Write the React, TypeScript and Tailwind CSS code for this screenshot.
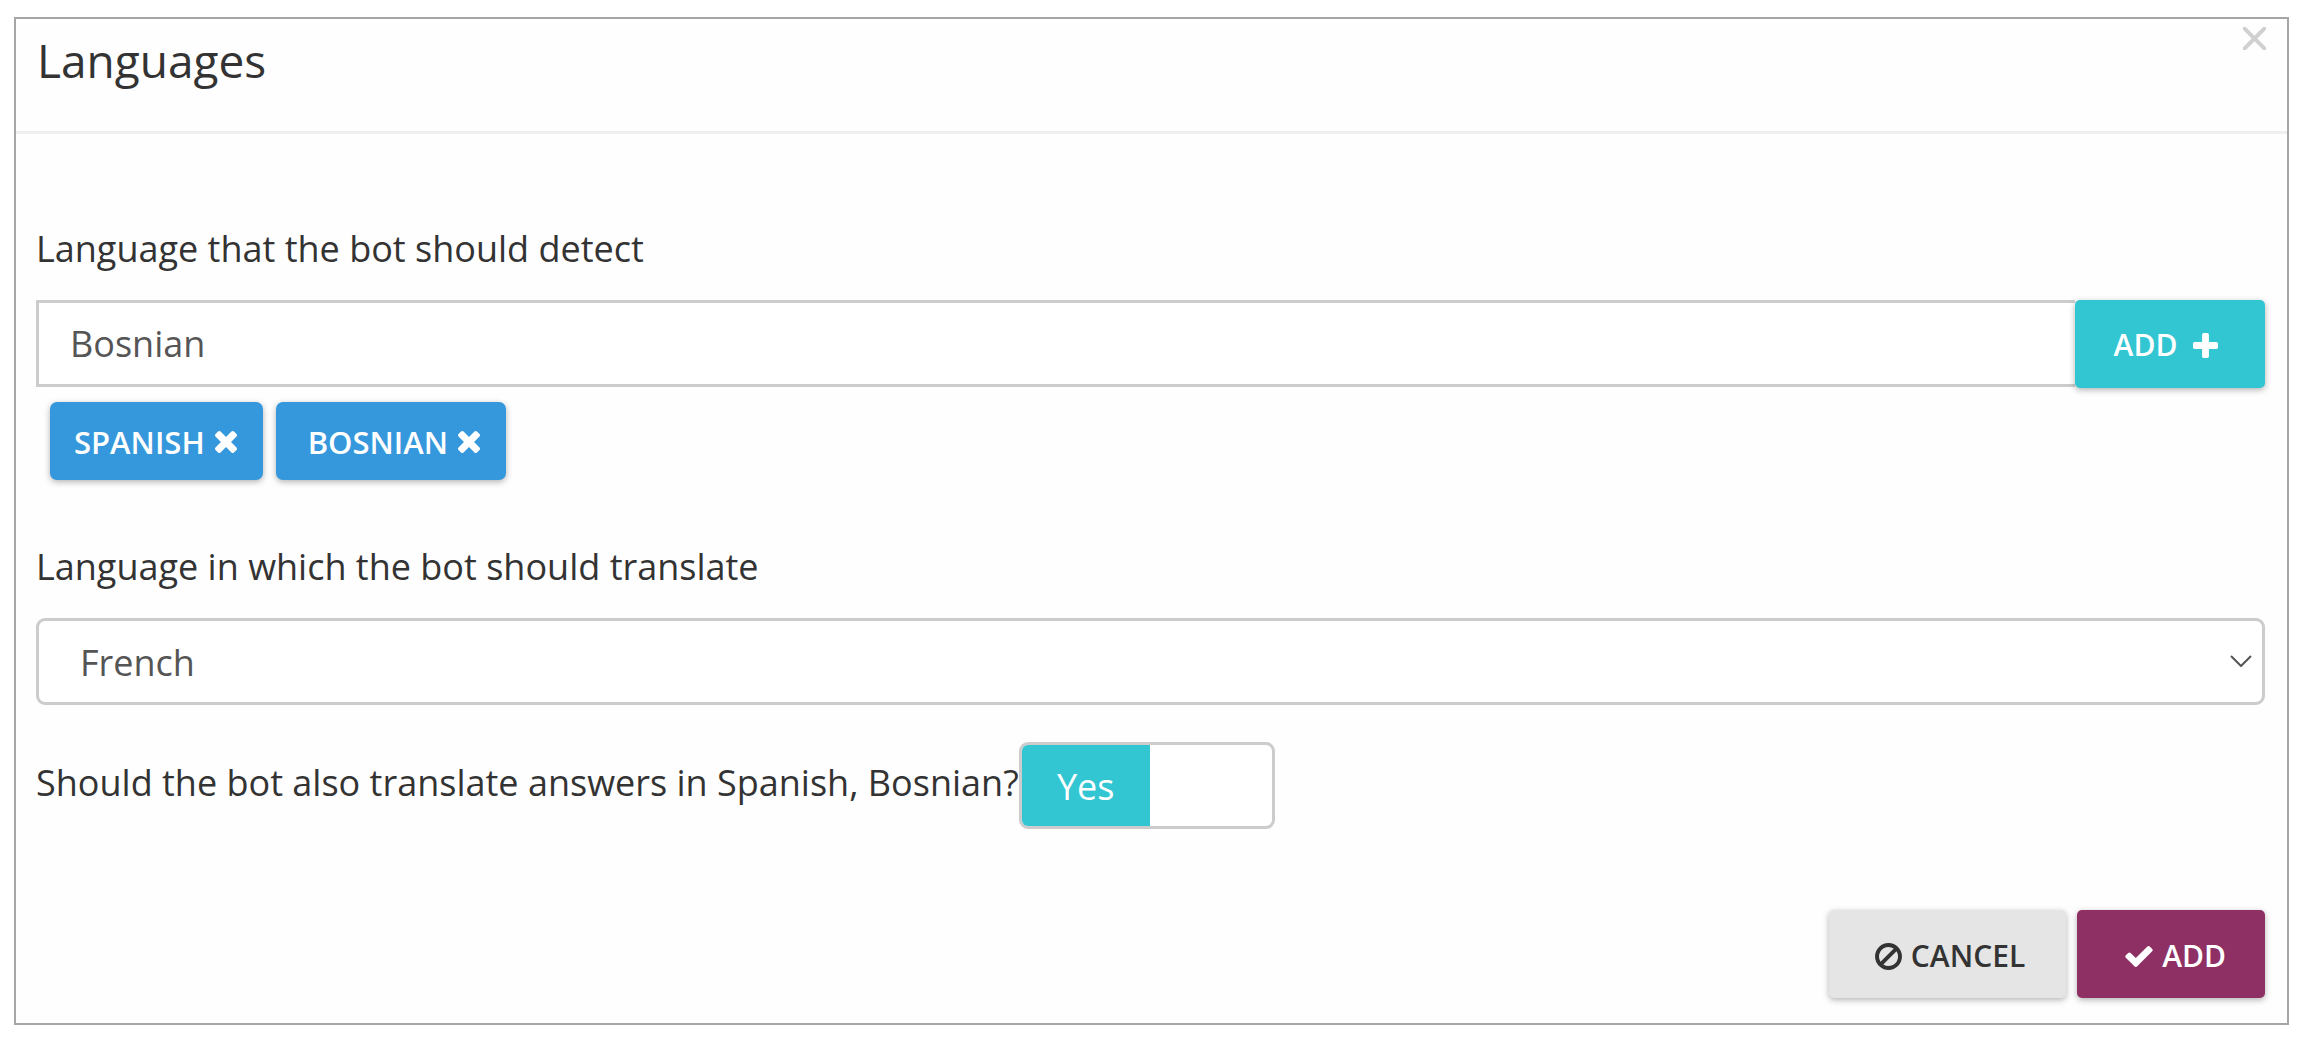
import { useState } from "react";

const glyphs = {
  times: {
    box: "302 366 1188 1188",
    path: "M1490 1322q0 40-28 68l-136 136q-28 28-68 28t-68-28l-294-294-294 294q-28 28-68 28t-68-28l-136-136q-28-28-28-68t28-68l294-294-294-294q-28-28-28-68t28-68l136-136q28-28 68-28t68 28l294 294 294-294q28-28 68-28t68 28l136 136q28 28 28 68t-28 68l-294 294 294 294q28 28 28 68z",
  },
  plus: {
    box: "192 128 1408 1408",
    path: "M1600 736v192q0 40-28 68t-68 28h-416v416q0 40-28 68t-68 28h-192q-40 0-68-28t-28-68v-416h-416q-40 0-68-28t-28-68v-192q0-40 28-68t68-28h416v-416q0-40 28-68t68-28h192q40 0 68 28t28 68v416h416q40 0 68 28t28 68z",
  },
  check: {
    box: "121 334 1550 1188",
    path: "M1671 566q0 40-28 68l-724 724-136 136q-28 28-68 28t-68-28l-136-136-362-362q-28-28-28-68t28-68l136-136q28-28 68-28t68 28l294 295 656-657q28-28 68-28t68 28l136 136q28 28 28 68z",
  },
  ban: {
    box: "128 123 1536 1541",
    path: "M1440 893q0-161-87-295l-754 753q137 89 297 89 111 0 211.5-43.5t173.5-116.5 116-174.5 43-212.5zm-999 299l755-754q-135-91-300-91-148 0-273 73t-198 199-73 274q0 162 89 299zm1223-299q0 157-61 300t-163.5 246-245 164-298.5 61-298.5-61-245-164-163.5-246-61-300 61-299.5 163.5-245.5 245-164 298.5-61 298.5 61 245 164 163.5 245.5 61 299.5z",
  },
};

function Glyph({ name, className }: { name: keyof typeof glyphs; className: string }) {
  return (
    <svg viewBox={glyphs[name].box} fill="currentColor" aria-hidden="true" className={className}>
      <path d={glyphs[name].path} />
    </svg>
  );
}

const raised = "shadow-[0_2px_6px_rgba(0,0,0,0.3)]";

export default function App() {
  const [detect, setDetect] = useState("Bosnian");
  const [target, setTarget] = useState("French");
  const [answers, setAnswers] = useState(true);

  return (
    <div className="bg-white pt-[17px] pr-3 pb-[19px] pl-[14px] font-['Open_Sans',sans-serif] text-[36px] leading-[48px] text-[#333]">
      <section role="dialog" aria-labelledby="title" className="border-2 border-[#a6a6a6] bg-[#fefefe]">
        <header className="flex items-start justify-between border-b-3 border-[#efefef] pt-2 pr-[21px] pb-[38px] pl-[21px]">
          <h1 id="title" className="text-[46px] leading-[66px]">
            Languages
          </h1>
          <button type="button" aria-label="Close" className="text-[#d0d0d0]">
            <svg viewBox="0 0 23 23" className="size-[23px]" fill="none" stroke="currentColor" strokeWidth="4">
              <path d="M0 0 23 23M23 0 0 23" />
            </svg>
          </button>
        </header>

        <form className="pt-[91px] pr-[22px] pb-[25px] pl-5" onSubmit={(e) => e.preventDefault()}>
          <label htmlFor="detect" className="mb-[27px] block">
            Language that the bot should detect
          </label>
          <div className="flex items-start">
            <input
              id="detect"
              type="text"
              value={detect}
              onChange={(e) => setDetect(e.target.value)}
              className="h-[87px] min-w-0 flex-1 border-3 border-r-0 border-[#ccc] bg-white px-[31px] text-[#555] outline-none"
            />
            <button
              type="button"
              className={`flex h-[88px] w-[190px] items-center justify-center gap-4 rounded-[5px] bg-[#32c5d2] pt-0.5 pr-2 text-[30px] font-semibold text-white ${raised}`}
            >
              ADD
              <Glyph name="plus" className="size-[25px]" />
            </button>
          </div>

          <div className="mt-[14px] flex gap-[13px] pl-[14px]">
            <button
              type="button"
              className={`flex h-[78px] items-center gap-[10px] rounded-[7px] bg-[#3598dc] pt-0.5 pr-[26px] pl-6 text-[31px] font-semibold text-white ${raised}`}
            >
              SPANISH
              <Glyph name="times" className="size-[22px]" />
            </button>
            <button
              type="button"
              className={`flex h-[78px] items-center gap-[10px] rounded-[7px] bg-[#3598dc] pt-0.5 pr-[26px] pl-8 text-[31px] font-semibold text-white ${raised}`}
            >
              BOSNIAN
              <Glyph name="times" className="size-[22px]" />
            </button>
          </div>

          <label htmlFor="target" className="mt-[63px] mb-[27px] block">
            Language in which the bot should translate
          </label>
          <div className="relative">
            <select
              id="target"
              value={target}
              onChange={(e) => setTarget(e.target.value)}
              className="block h-[87px] w-full appearance-none rounded-[9px] border-3 border-[#ccc] bg-white px-[41px] pt-0.5 text-[#555] outline-none"
            >
              <option>French</option>
              <option>Spanish</option>
              <option>Bosnian</option>
            </select>
            <svg
              viewBox="0 0 22 12"
              aria-hidden="true"
              className="pointer-events-none absolute top-[37px] right-[13px] h-3 w-[22px]"
              fill="none"
              stroke="#555"
              strokeWidth="2"
            >
              <path d="M1 1 11 11 21 1" />
            </svg>
          </div>

          <label className="mt-[37px] flex items-start">
            <span className="pt-[17px]">Should the bot also translate answers in Spanish, Bosnian?</span>
            <input
              type="checkbox"
              role="switch"
              checked={answers}
              onChange={(e) => setAnswers(e.target.checked)}
              className="peer sr-only"
            />
            <span
              aria-hidden="true"
              className="flex h-[87px] w-64 overflow-hidden rounded-[9px] border-3 border-[#ccc] bg-white"
            >
              {answers && (
                <span className="flex w-32 items-center justify-center bg-[#32c5d2] pt-[3px] text-white">Yes</span>
              )}
            </span>
          </label>

          <div className="mt-[81px] flex justify-end gap-[11px] text-[30px] font-semibold">
            <button
              type="button"
              className={`flex h-[88px] items-center gap-[9px] rounded-[5px] bg-[#e5e5e5] pt-1 pr-[41px] pl-[46px] ${raised}`}
            >
              <Glyph name="ban" className="size-[27px]" />
              CANCEL
            </button>
            <button
              type="submit"
              className={`flex h-[88px] items-center gap-[9px] rounded-[5px] bg-[#8e3063] pt-1 pr-[39px] pl-12 text-white ${raised}`}
            >
              <Glyph name="check" className="h-[21px] w-7" />
              ADD
            </button>
          </div>
        </form>
      </section>
    </div>
  );
}
